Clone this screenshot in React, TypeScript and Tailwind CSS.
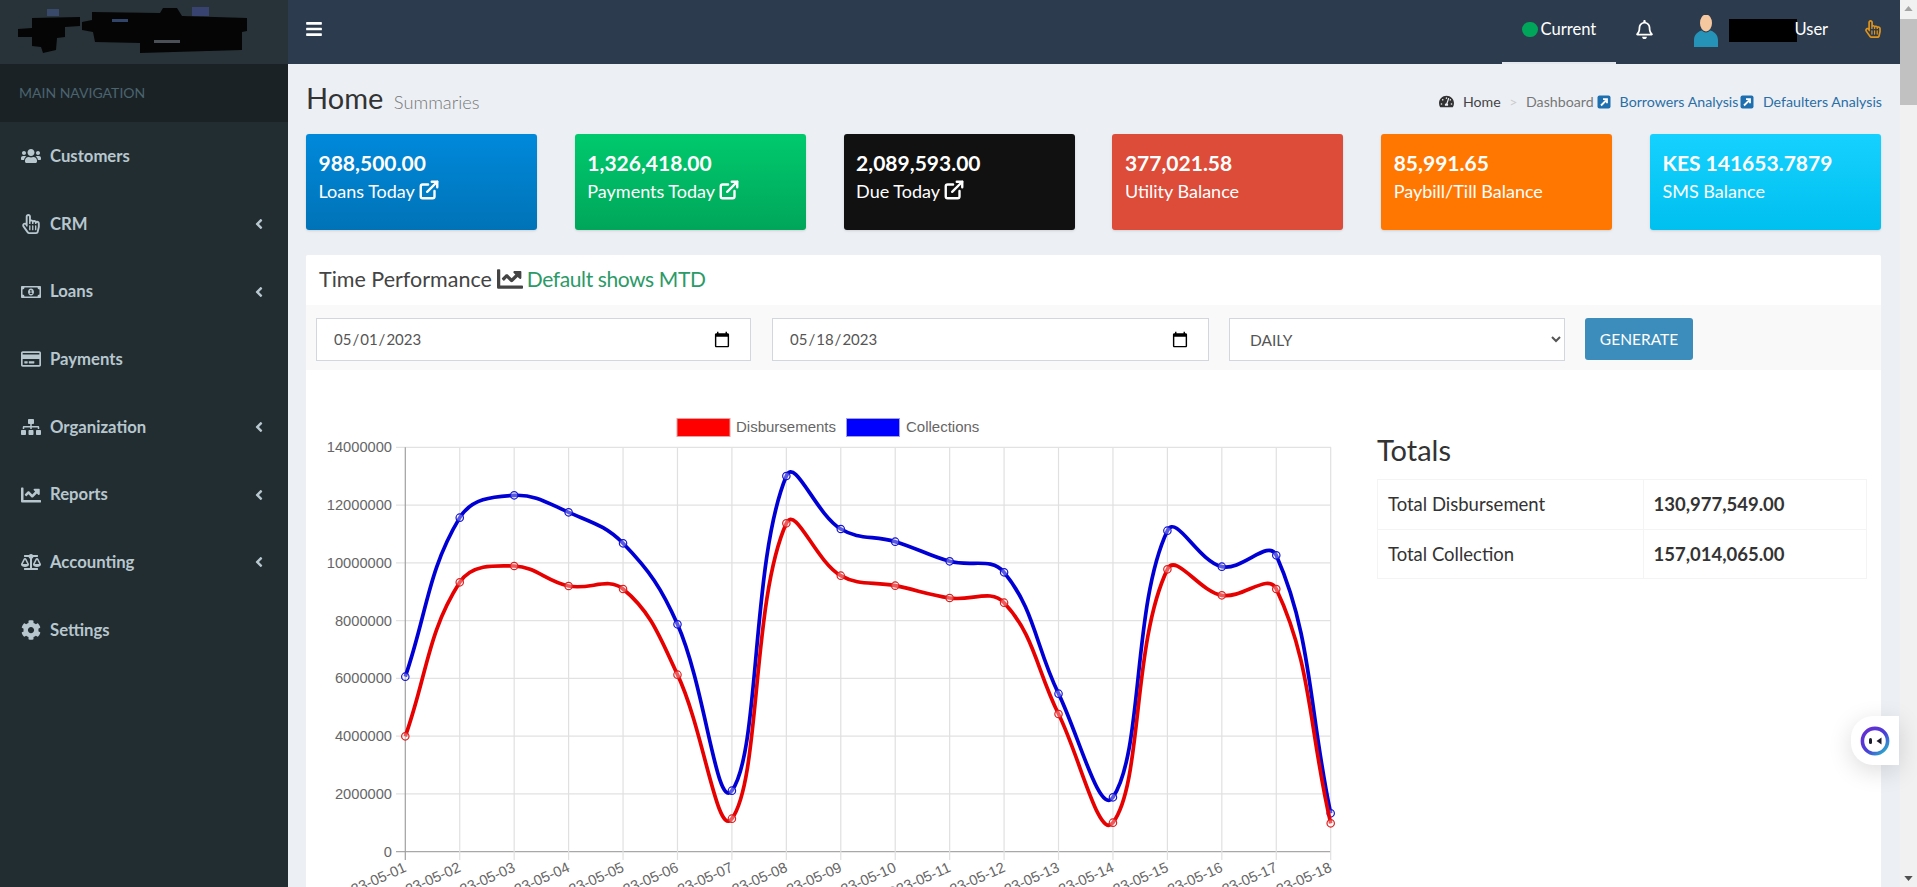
import React from "react";
import {
  FaBars, FaRegBell, FaRegHandPointer, FaUsers, FaRegMoneyBillAlt, FaRegCreditCard, FaSitemap,
  FaChartLine, FaBalanceScale, FaCog, FaAngleLeft, FaTachometerAlt,
} from "react-icons/fa";
import { LuExternalLink } from "react-icons/lu";

const nav = [
  { label: "Customers", Icon: FaUsers, sub: false },
  { label: "CRM", Icon: FaRegHandPointer, sub: true },
  { label: "Loans", Icon: FaRegMoneyBillAlt, sub: true },
  { label: "Payments", Icon: FaRegCreditCard, sub: false },
  { label: "Organization", Icon: FaSitemap, sub: true },
  { label: "Reports", Icon: FaChartLine, sub: true },
  { label: "Accounting", Icon: FaBalanceScale, sub: true },
  { label: "Settings", Icon: FaCog, sub: false },
];

const cards = [
  { value: "988,500.00", label: "Loans Today", link: true, cls: "bg-linear-to-t from-[#0073b7] to-[#0089db]" },
  { value: "1,326,418.00", label: "Payments Today", link: true, cls: "bg-linear-to-t from-[#00a65a] to-[#00ca6d]" },
  { value: "2,089,593.00", label: "Due Today", link: true, cls: "bg-[#111111]" },
  { value: "377,021.58", label: "Utility Balance", link: false, cls: "bg-[#dd4b39]" },
  { value: "85,991.65", label: "Paybill/Till Balance", link: false, cls: "bg-[#ff7701]" },
  { value: "KES 141653.7879", label: "SMS Balance", link: false, cls: "bg-linear-to-t from-[#00c0ef] to-[#14d1ff]" },
];

const X0 = 405.3;
const STEP = (1330.7 - 405.3) / 17;
const blueZ = [710, 233, 166, 217, 310, 553, 1052, 108, 267, 305, 364, 397, 761, 1072, 272, 380, 346, 1120];
const redZ = [889, 427, 378, 438, 447, 704, 1136, 250, 407, 437, 474, 488, 822, 1148, 388, 466, 447, 1150];
const toPts = (z: number[]) => z.map((v, i) => [X0 + i * STEP, 440 + v / 3] as [number, number]);

function spline(pts: [number, number][]) {
  const t = 0.4;
  const cp = pts.map((p, i) => {
    const a = pts[Math.max(i - 1, 0)];
    const b = pts[Math.min(i + 1, pts.length - 1)];
    const d01 = Math.hypot(p[0] - a[0], p[1] - a[1]);
    const d12 = Math.hypot(b[0] - p[0], b[1] - p[1]);
    const tot = d01 + d12 || 1;
    const fa = (t * d01) / tot;
    const fb = (t * d12) / tot;
    return {
      px: p[0] - fa * (b[0] - a[0]),
      py: p[1] - fa * (b[1] - a[1]),
      nx: p[0] + fb * (b[0] - a[0]),
      ny: p[1] + fb * (b[1] - a[1]),
    };
  });
  let d = `M${pts[0][0]} ${pts[0][1]}`;
  for (let i = 1; i < pts.length; i++) {
    d += ` C${cp[i - 1].nx} ${cp[i - 1].ny} ${cp[i].px} ${cp[i].py} ${pts[i][0]} ${pts[i][1]}`;
  }
  return d;
}

const LinkBox = () => (
  <svg viewBox="0 0 14 14" className="w-[14px] h-[14px] shrink-0">
    <rect x="0.5" y="0.5" width="13" height="13" rx="2" fill="#1e6fb0" />
    <path d="M4 10.5 L9 5.5 M6 4.2 H10 V8.2" stroke="#fff" strokeWidth="1.8" fill="none" />
  </svg>
);

function Chart() {
  const blue = toPts(blueZ);
  const red = toPts(redZ);
  const yLabels = ["14000000", "12000000", "10000000", "8000000", "6000000", "4000000", "2000000", "0"];
  const top = 447.3;
  const gap = (851.7 - 447.3) / 7;
  return (
    <svg viewBox="320 370 1020 517" width="1020" height="517" className="block shrink-0 ml-[14px]" style={{ fontFamily: '"Liberation Sans", Arial, sans-serif' }}>
      <rect x="677" y="418.5" width="53" height="18" fill="#ff0000" stroke="#e8a0a0" strokeWidth="1" />
      <text x="736" y="432" fontSize="15" fill="#666">Disbursements</text>
      <rect x="846.5" y="418.5" width="53" height="18" fill="#0000ff" stroke="#a0a0e8" strokeWidth="1" />
      <text x="906" y="432" fontSize="15" fill="#666">Collections</text>

      {yLabels.map((l, i) => (
        <g key={l}>
          <line x1="396" x2="1331" y1={top + i * gap} y2={top + i * gap} stroke={i === 7 ? "#a8a8a8" : "#e2e2e2"} strokeWidth="1.2" />
          <text x="392" y={top + i * gap + 5} fontSize="14.67" fill="#666" textAnchor="end">{l}</text>
        </g>
      ))}
      {blue.map((p, i) => (
        <g key={i}>
          <line x1={p[0]} x2={p[0]} y1={top} y2="860" stroke={i === 0 ? "#a0a0a0" : "#e0e0e0"} strokeWidth="1.2" />
          <text
            transform={`translate(${p[0] + 2} 871) rotate(-24)`}
            fontSize="14.67"
            fill="#666"
            textAnchor="end"
          >{`2023-05-${String(i + 1).padStart(2, "0")}`}</text>
        </g>
      ))}

      <path d={spline(blue)} fill="none" stroke="#0000d4" strokeWidth="3.7" />
      {blue.map((p, i) => (
        <circle key={i} cx={p[0]} cy={p[1]} r="3.7" fill="#ffffff" fillOpacity="0.35" stroke="#1414d0" strokeWidth="1.2" />
      ))}
      <path d={spline(red)} fill="none" stroke="#e60000" strokeWidth="3.7" />
      {red.map((p, i) => (
        <circle key={i} cx={p[0]} cy={p[1]} r="3.7" fill="#ffffff" fillOpacity="0.35" stroke="#dc2020" strokeWidth="1.2" />
      ))}
    </svg>
  );
}

export default function App() {
  return (
    <div className="relative flex h-[887px] w-[1917px] overflow-hidden bg-[#ecf0f5] text-[#333]" style={{ fontFamily: 'Lato, "Noto Sans", sans-serif' }}>
      <aside className="w-[288px] shrink-0 bg-[#222d32] flex flex-col">
        <div className="h-16 shrink-0 bg-[#283339]">
          <svg viewBox="0 0 288 64" className="block w-[288px] h-16">
            <rect x="47" y="9" width="12" height="7" fill="#45598a" opacity="0.6" />
            <rect x="192" y="7" width="17" height="9" fill="#3f4a88" opacity="0.7" />
            <path fill="#050505" d="M32 18 L80 17 L80 26 L65 27 L65 37 L57 38 L56 50 L43 53 L41 47 L32 46 L32 37 L18 37 L18 29 L32 28 Z" />
            <path fill="#050505" d="M92 12 L160 13 L163 8 L177 8 L182 16 L247 18 L247 31 L242 32 L242 50 L140 53 L140 43 L95 42 L93 32 L82 30 L82 22 L92 20 Z" />
            <rect x="112" y="19" width="16" height="3" fill="#31456a" />
            <rect x="154" y="40" width="26" height="3" fill="#4a5056" />
          </svg>
        </div>
        <div className="h-[58px] shrink-0 bg-[#1a2226] flex items-center px-[19px] pb-[2px] text-[14px] text-[#4b646f]">MAIN NAVIGATION</div>
        {nav.map(({ label, Icon, sub }) => (
          <div key={label} className="h-[67.7px] shrink-0 flex items-center pl-[21px] pr-[21px] pt-[1px] text-[#b8c7ce]">
            <span className="w-[29px] flex shrink-0"><Icon className="text-[20px]" /></span>
            <span className="text-[16.7px] font-bold">{label}</span>
            {sub && <FaAngleLeft className="ml-auto text-[16px]" />}
          </div>
        ))}
      </aside>

      <div className="w-[1612px] shrink-0 flex flex-col">
        <header className="h-16 shrink-0 bg-[#2c3b4d] flex items-center text-white">
          <FaBars className="ml-[17px] text-[18px] -mt-[7px]" />
          <div className="ml-auto h-16 w-[114px] border-b-2 border-[#e4e8ee] flex items-center pl-[20px] gap-[3px] pb-[3px]">
            <span className="w-[16px] h-[15px] rounded-full bg-[#00a65a] shrink-0" />
            <span className="text-[16.6px]">Current</span>
          </div>
          <FaRegBell className="ml-[19px] text-[19px] -mt-[6px]" />
          <svg viewBox="0 0 26 32" className="ml-[39px] w-[26px] h-[32px] -mt-[2px] shrink-0">
            <ellipse cx="13" cy="8" rx="6" ry="8.5" fill="#f6c8a0" />
            <path d="M1 32 V25 C1 19 6 16 9 15.5 C11 18 15 18 17 15.5 C20 16 25 19 25 25 V32 C17 33 8 33 1 32 Z" fill="#2593b8" />
          </svg>
          <div className="ml-[10.5px] w-[68px] h-[23px] bg-black -mt-[4px]" />
          <span className="relative -ml-[2.5px] text-[16.5px] -mt-[6px] w-[32px]">User</span>
          <FaRegHandPointer className="ml-[37.5px] mr-[18px] text-[18px] text-[#e0941a] -mt-[6px]" />
        </header>

        <main className="flex-1 min-h-0 px-[18px]">
          <div className="h-[70px] flex items-end justify-between pb-[17.5px]">
            <div className="flex items-baseline">
              <h1 className="text-[29px] leading-none text-[#333]">Home</h1>
              <span className="ml-[10.5px] text-[18.3px] font-light text-[#777]">Summaries</span>
            </div>
            <div className="flex items-center text-[14.2px] h-[20px] mb-[5px] pr-0">
              <FaTachometerAlt className="text-[15px] text-[#333] mr-[9px]" />
              <span className="text-[#444]">Home</span>
              <span className="mx-[8.5px] text-[#ccc]">&gt;</span>
              <span className="text-[#777]">Dashboard</span>
              <span className="ml-[3px] mr-[9px]"><LinkBox /></span>
              <span className="text-[#2a6ea6]">Borrowers Analysis</span>
              <span className="ml-[2px] mr-[8.5px]"><LinkBox /></span>
              <span className="text-[#2a6ea6]">Defaulters Analysis</span>
            </div>
          </div>

          <div className="flex justify-between w-[1575px]">
            {cards.map((c) => (
              <div key={c.label} className={`w-[231px] h-24 rounded-[3px] shadow-sm text-white pl-[12.5px] pt-[15px] ${c.cls}`}>
                <div className="text-[21px] font-bold leading-[28px]">{c.value}</div>
                <div className="flex items-center text-[18px] leading-[28px] gap-[3px]">
                  {c.label}
                  {c.link && <LuExternalLink className="text-[22px] -mt-[3px] stroke-[2.6]" />}
                </div>
              </div>
            ))}
          </div>

          <section className="mt-[25px] w-[1575px] h-[700px] bg-white rounded-t-[2px]">
            <div className="h-[50px] flex items-center pl-[13px] pb-[2px] text-[21.5px] text-[#444]">
              <span>Time Performance</span>
              <FaChartLine className="ml-[5px] mr-[4px] text-[26px]" />
              <span className="text-[#2b9a67] text-[21px] tracking-[-0.4px]">Default shows MTD</span>
            </div>
            <div className="h-[65px] bg-[#f9f9f9] flex items-start pt-[13px] pl-[10px]">
              <input type="date" defaultValue="2023-05-01" className="w-[435px] h-[43px] bg-white border border-[#d2d6de] pl-[16px] pr-[17px] text-[15px] text-[#555] [&::-webkit-calendar-picker-indicator]:w-[18px] [&::-webkit-calendar-picker-indicator]:h-[18px]" />
              <input type="date" defaultValue="2023-05-18" className="ml-[21px] w-[437px] h-[43px] bg-white border border-[#d2d6de] pl-[16px] pr-[17px] text-[15px] text-[#555] [&::-webkit-calendar-picker-indicator]:w-[18px] [&::-webkit-calendar-picker-indicator]:h-[18px]" />
              <select defaultValue="DAILY" className="ml-[20px] w-[336px] h-[43px] bg-white border border-[#d2d6de] pl-[16px] text-[15.5px] text-[#555]">
                <option>DAILY</option>
              </select>
              <button className="ml-[20px] w-[108px] h-[42px] pt-[1px] bg-[#3c8dbc] rounded-[3px] text-white text-[15.5px]">GENERATE</button>
            </div>
            <div className="flex">
              <Chart />
              <div className="ml-[37px] w-[490px] shrink-0">
                <h3 className="mt-[65px] text-[29px] leading-[30px] text-[#333]">Totals</h3>
                <table className="mt-[14px] w-full border-collapse text-[18.5px] text-[#333]">
                  <tbody>
                    <tr className="h-[49.5px]">
                      <td className="w-[265.5px] border border-[#f4f4f4] pl-[10px] pt-[2px]">Total Disbursement</td>
                      <td className="border border-[#f4f4f4] pl-[10px] pt-[2px] font-bold">130,977,549.00</td>
                    </tr>
                    <tr className="h-[49.5px]">
                      <td className="border border-[#f4f4f4] pl-[10px] pt-[2px]">Total Collection</td>
                      <td className="border border-[#f4f4f4] pl-[10px] pt-[2px] font-bold">157,014,065.00</td>
                    </tr>
                  </tbody>
                </table>
              </div>
            </div>
          </section>
        </main>
      </div>

      <div className="w-[17px] shrink-0 bg-[#f1f1f1] flex flex-col items-center">
        <div className="h-[17px] flex items-center justify-center">
          <svg viewBox="0 0 10 6" className="w-[9px] h-[5px]"><path d="M5 0 L10 6 H0 Z" fill="#a3a3a3" /></svg>
        </div>
        <div className="mt-[2px] w-full h-[86px] bg-[#c1c1c1]" />
        <div className="mt-auto h-[17px] flex items-center justify-center">
          <svg viewBox="0 0 10 6" className="w-[9px] h-[5px]"><path d="M5 6 L10 0 H0 Z" fill="#505050" /></svg>
        </div>
      </div>

      <div className="absolute left-[1851px] top-[716px] w-[48px] h-[49px] bg-white rounded-l-[22px] shadow-[0_6px_24px_rgba(0,0,0,0.14)] flex items-center justify-center">
        <svg viewBox="0 0 32 32" className="w-[32px] h-[32px]">
          <defs>
            <linearGradient id="chatring" x1="0" y1="0" x2="1" y2="1">
              <stop offset="0" stopColor="#6a2bd0" />
              <stop offset="0.55" stopColor="#4a3fd8" />
              <stop offset="1" stopColor="#22c0c8" />
            </linearGradient>
          </defs>
          <circle cx="16" cy="16" r="12.6" fill="#fff" stroke="url(#chatring)" strokeWidth="3.6" />
          <rect x="10" y="13" width="3" height="6" rx="1.5" fill="#1b1b2e" />
          <path d="M22.5 12.5 L17.5 16 L22.5 19.5 Z" fill="#1b1b2e" />
        </svg>
      </div>
    </div>
  );
}
